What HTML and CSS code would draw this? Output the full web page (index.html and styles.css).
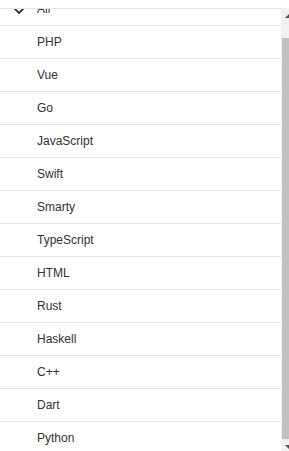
FILE: index.html
```html
<!DOCTYPE html>
<html>
<head>
<meta charset="utf-8">
<link rel="stylesheet" href="styles.css">
</head>
<body>
<div class="menu">
  <div class="viewport">
    <ul class="list">
      <li class="item selected"><svg class="check" width="12" height="8" viewBox="0 0 12 8"><polyline points="1,1 6,6 11,1" fill="none" stroke="#303133" stroke-width="1.8"/></svg>All</li>
      <li class="item">PHP</li>
      <li class="item">Vue</li>
      <li class="item">Go</li>
      <li class="item">JavaScript</li>
      <li class="item">Swift</li>
      <li class="item">Smarty</li>
      <li class="item">TypeScript</li>
      <li class="item">HTML</li>
      <li class="item">Rust</li>
      <li class="item">Haskell</li>
      <li class="item">C++</li>
      <li class="item">Dart</li>
      <li class="item">Python</li>
    </ul>
  </div>
  <div class="scrollbar">
    <div class="sb-btn"><svg width="8" height="4" viewBox="0 0 8 4"><polygon points="0,4 4,0 8,4" fill="#505050"/></svg></div>
    <div class="sb-track"><div class="sb-thumb"></div></div>
    <div class="sb-btn"><svg width="8" height="4" viewBox="0 0 8 4"><polygon points="0,0 8,0 4,4" fill="#505050"/></svg></div>
  </div>
</div>
</body>
</html>
```

FILE: styles.css
```css
html, body {
  margin: 0;
  padding: 0;
  overflow: hidden;
  background: #fff;
}
body {
  padding-top: 8px;
  font-family: "Liberation Sans", Arial, sans-serif;
}
.menu {
  display: flex;
  width: 296px;
  height: 446px;
}
.viewport {
  flex: 1;
  overflow: hidden;
  border-top: 1px solid #e6e6e6;
}
.list {
  list-style: none;
  margin: -16px 0 0 0;
  padding: 0;
}
.item {
  position: relative;
  height: 32px;
  line-height: 32px;
  padding-left: 37px;
  font-size: 12px;
  color: #303133;
  border-bottom: 1px solid #e6e6e6;
}
.check {
  position: absolute;
  left: 13px;
  top: 14px;
}
.scrollbar {
  width: 15px;
  display: flex;
  flex-direction: column;
  background: #f1f1f1;
}
.sb-btn {
  height: 15px;
  display: flex;
  align-items: center;
  justify-content: center;
}
.sb-track {
  flex: 1;
  display: flex;
  flex-direction: column;
}
.sb-thumb {
  margin: 15px 2px 0 1px;
  height: 401px;
  background: #c1c1c1;
}
```
